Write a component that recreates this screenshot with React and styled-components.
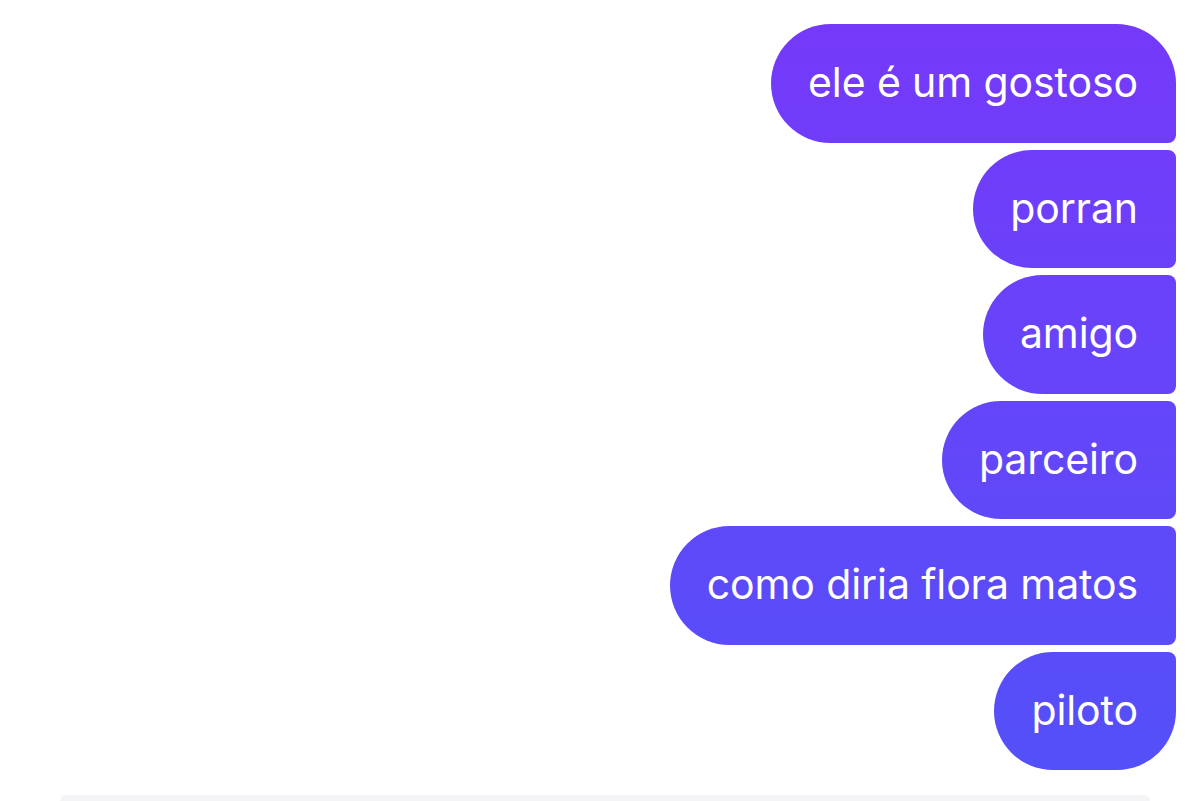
import React from 'react'
import styled, { createGlobalStyle } from 'styled-components'

const GlobalStyle = createGlobalStyle`
    html, body {
        margin: 0;
        padding: 0;
        background: #ffffff;
        overflow: hidden;
    }
    body {
        font-family: Inter, "Noto Sans", sans-serif;
    }
`

const Page = styled.div`
    display: flex;
    flex-direction: column;
    height: 801px;
    overflow: hidden;
`

const Thread = styled.ul`
    list-style: none;
    margin: 0;
    padding: 24px 24px 0 0;
    display: flex;
    flex-direction: column;
    align-items: flex-end;
    gap: 7px;
`

const radius = {
    first: '60px 60px 8px 60px',
    middle: '60px 8px 8px 60px',
    last: '60px 8px 60px 60px',
}

const Bubble = styled.li`
    display: flex;
    align-items: center;
    height: 118.5px;
    box-sizing: border-box;
    padding: 0 38px 2px 37px;
    border-radius: ${({ $pos }) => radius[$pos]};
    background: linear-gradient(to bottom, #7638fa 0px, #6545f9 400px, #5251f8 801px);
    background-attachment: fixed;
    color: #ffffff;
    font-size: 41px;
    font-weight: 400;
    letter-spacing: -0.1px;
    white-space: nowrap;
`

const Composer = styled.div`
    margin: 25px 50px 0 60px;
    height: 60px;
    border-radius: 40px 40px 0 0;
    background: #f4f4f6;
`

const messages = [
    'ele é um gostoso',
    'porran',
    'amigo',
    'parceiro',
    'como diria flora matos',
    'piloto',
]

const App = () => {
    const position = (i) => {
        if (i === 0) return 'first'
        if (i === messages.length - 1) return 'last'
        return 'middle'
    }

    return (
        <Page>
            <GlobalStyle />
            <Thread>
                {messages.map((text, i) => (
                    <Bubble key={i} $pos={position(i)}>{text}</Bubble>
                ))}
            </Thread>
            <Composer />
        </Page>
    )
}

export default App
